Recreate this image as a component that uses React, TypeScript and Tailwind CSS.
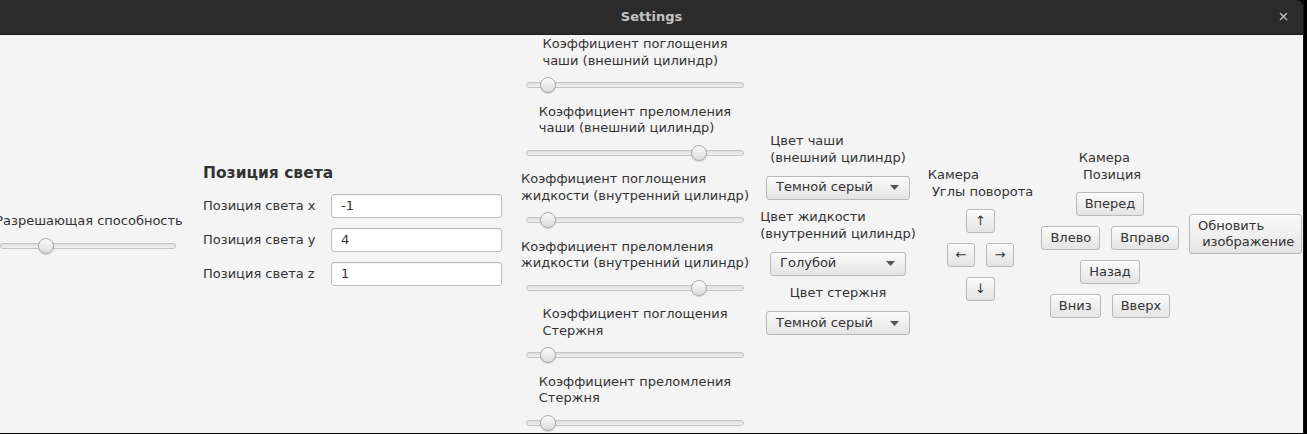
import React from 'react';

const font = { fontFamily: '"DejaVu Sans", "Noto Sans", sans-serif' };

const Slider = ({ width, pos }: { width: number; pos: number }) => (
  <div className="relative h-[18px] shrink-0" style={{ width }}>
    <div className="absolute left-0 right-0 top-[6px] h-[6px] rounded-full border border-[#c4c4c4] bg-gradient-to-b from-[#dedede] to-[#f0f0f0]" />
    <div
      className="absolute top-[1px] h-[16px] w-[16px] rounded-full border border-[#a9a9a9] bg-gradient-to-b from-[#fbfbfb] to-[#dcdcdc] shadow-[0_1px_1px_rgba(0,0,0,0.15)]"
      style={{ left: pos - 8 }}
    />
  </div>
);

const Btn = ({ children, className = '' }: { children: React.ReactNode; className?: string }) => (
  <button
    className={`h-[24px] shrink-0 rounded-[3px] border border-[#b8b8b8] bg-gradient-to-b from-[#fafafa] to-[#e4e4e4] px-[8px] text-[13px] leading-[16px] text-[#333] shadow-[inset_0_1px_0_#fff] ${className}`}
  >
    {children}
  </button>
);

const Combo = ({ label, width }: { label: string; width: number }) => (
  <div
    className="flex h-[24px] shrink-0 items-center justify-between rounded-[3px] border border-[#b8b8b8] bg-gradient-to-b from-[#fafafa] to-[#e4e4e4] pl-[9px] pr-[10px] text-[13px] text-[#333]"
    style={{ width }}
  >
    <span>{label}</span>
    <svg width="9" height="5" viewBox="0 0 9 5">
      <path d="M0 0h9L4.5 5z" fill="#555" />
    </svg>
  </div>
);

const Field = ({ label, value }: { label: string; value: string }) => (
  <div className="flex h-[24px] items-center">
    <span className="w-[128px] shrink-0">{label}</span>
    <div className="flex h-[24px] w-[171px] items-center rounded-[3px] border border-[#bdbdbd] bg-white pl-[9px] shadow-[inset_0_1px_1px_rgba(0,0,0,0.06)]">
      {value}
    </div>
  </div>
);

const coefs = [
  ['Коэффициент поглощения\nчаши (внешний цилиндр)', 22],
  ['Коэффициент преломления\nчаши (внешний цилиндр)', 173],
  ['Коэффициент поглощения\nжидкости (внутренний цилиндр)', 22],
  ['Коэффициент преломления\nжидкости (внутренний цилиндр)', 173],
  ['Коэффициент поглощения\nСтержня', 22],
  ['Коэффициент преломления\nСтержня', 22],
] as const;

export default function App() {
  return (
    <div className="h-[434px] w-[1307px] overflow-hidden bg-black" style={font}>
      <div className="flex h-[433px] w-[1304px] flex-col border-r border-[#111]">
        <div className="relative flex h-[35px] shrink-0 items-center justify-center rounded-tr-[7px] border-b border-[#1c1c1c] bg-[#2b2b2b]">
          <span className="text-[13px] font-bold text-[#c4c4c4]">Settings</span>
          <svg className="absolute right-[15px] top-[12px]" width="9" height="9" viewBox="0 0 9 9">
            <path d="M1 1l7 7M8 1l-7 7" stroke="#bdbdbd" strokeWidth="1.4" />
          </svg>
        </div>
        <div className="flex h-[398px] items-center overflow-hidden bg-[#f4f4f4] text-[13px] leading-[16.5px] text-[#333]">
          {/* resolution */}
          <div className="ml-[-4px] flex w-[186px] shrink-0 flex-col items-center gap-[8px]">
            <span className="whitespace-nowrap">Разрешающая способность</span>
            <div className="ml-[4px] self-start">
              <Slider width={176} pos={46} />
            </div>
          </div>

          {/* light position */}
          <div className="mb-[19px] ml-[21px] flex w-[299px] shrink-0 flex-col gap-[10px]">
            <span className="mb-[1px] text-[15.5px] font-bold leading-[20px]">Позиция света</span>
            <Field label="Позиция света x" value="-1" />
            <Field label="Позиция света y" value="4" />
            <Field label="Позиция света z" value="1" />
          </div>

          {/* coefficients */}
          <div className="ml-[20px] flex w-[226px] shrink-0 flex-col items-center">
            {coefs.map(([label, pos], i) => (
              <div key={i} className={`flex flex-col items-center ${i < 5 ? 'mb-[9.5px]' : ''}`}>
                <span className="whitespace-pre">{label}</span>
                <div className="mt-[7px]">
                  <Slider width={218} pos={pos} />
                </div>
              </div>
            ))}
          </div>

          {/* colours */}
          <div className="ml-[12px] flex w-[156px] shrink-0 flex-col items-center gap-[9.5px]">
            <span className="whitespace-pre">{'Цвет чаши\n(внешний цилиндр)'}</span>
            <Combo label="Темной серый" width={144} />
            <span className="whitespace-pre">{'Цвет жидкости\n(внутренний цилиндр)'}</span>
            <Combo label="Голубой" width={136} />
            <span className="whitespace-pre">Цвет стержня</span>
            <Combo label="Темной серый" width={144} />
          </div>

          {/* camera rotation */}
          <div className="ml-[12px] flex w-[105px] shrink-0 flex-col items-center gap-[10px]">
            <span className="mb-[-1px] whitespace-pre">{'Камера\n Углы поворота'}</span>
            <Btn className="w-[29px] !px-0">↑</Btn>
            <div className="flex gap-[11px]">
              <Btn className="w-[28px] !px-0">←</Btn>
              <Btn className="w-[28px] !px-0">→</Btn>
            </div>
            <Btn className="w-[29px] !px-0">↓</Btn>
          </div>

          {/* camera position */}
          <div className="ml-[9px] flex w-[136px] shrink-0 flex-col items-center gap-[10px]">
            <span className="mb-[-1px] whitespace-pre">{'Камера\n Позиция'}</span>
            <Btn>Вперед</Btn>
            <div className="flex gap-[11px]">
              <Btn>Влево</Btn>
              <Btn>Вправо</Btn>
            </div>
            <Btn>Назад</Btn>
            <div className="flex gap-[11px]">
              <Btn>Вниз</Btn>
              <Btn>Вверх</Btn>
            </div>
          </div>

          {/* refresh */}
          <div className="ml-[11px] flex w-[113px] shrink-0">
            <Btn className="!h-[40px] w-[113px] whitespace-pre text-left">{'Обновить\n изображение'}</Btn>
          </div>
        </div>
      </div>
    </div>
  );
}
